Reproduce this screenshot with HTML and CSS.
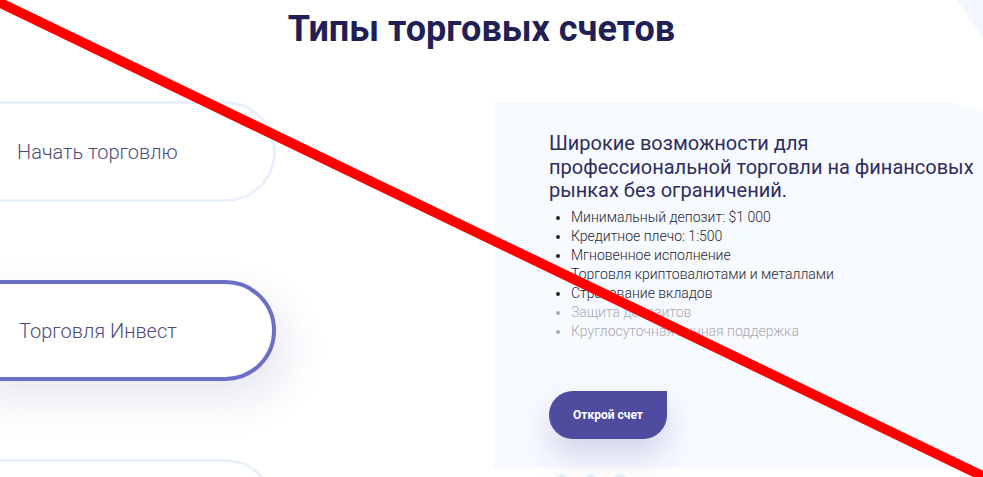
FILE: index.html
```html
<!DOCTYPE html>
<html lang="ru">
<head>
<meta charset="utf-8">
<title>Типы торговых счетов</title>
<link rel="stylesheet" href="styles.css">
</head>
<body>
<div class="page">
  <svg class="corner-deco" width="983" height="477" viewBox="0 0 983 477" aria-hidden="true">
    <polygon points="957,0 983,0 983,38" fill="#f2f6fe"/>
  </svg>
  <h1 class="title">Типы торговых счетов</h1>
  <div class="content">
    <div class="tabs">
      <div class="tab">Начать торговлю</div>
      <div class="tab tab-active">Торговля Инвест</div>
      <div class="tab"></div>
    </div>
    <div class="panel-wrap">
      <div class="panel">
        <p class="panel-title">Широкие возможности для<br>профессиональной торговли на финансовых<br>рынках без ограничений.</p>
        <ul class="features">
          <li>Минимальный депозит: $1 000</li>
          <li>Кредитное плечо: 1:500</li>
          <li>Мгновенное исполнение</li>
          <li>Торговля криптовалютами и металлами</li>
          <li>Страхование вкладов</li>
          <li class="muted">Защита депозитов</li>
          <li class="muted">Круглосуточная личная поддержка</li>
        </ul>
        <button class="open-btn">Открой счет</button>
      </div>
      <div class="dots">
        <span class="dot"></span><span class="dot"></span><span class="dot"></span>
      </div>
    </div>
  </div>
  <svg class="strike" width="983" height="477" viewBox="0 0 983 477" aria-hidden="true">
    <line x1="-10" y1="-2" x2="995" y2="482" stroke="#ff0000" stroke-width="10"/>
  </svg>
</div>
</body>
</html>
```
FILE: styles.css
```css
* { box-sizing: border-box; }
html, body { margin: 0; padding: 0; background: #ffffff; }
body { font-family: Roboto, "Noto Sans", "Liberation Sans", sans-serif; }

.page {
  position: relative;
  width: 983px;
  height: 477px;
  overflow: hidden;
  background: #ffffff;
}

.corner-deco {
  position: absolute;
  left: 0;
  top: 0;
  pointer-events: none;
}

.title {
  position: relative;
  margin: 7px 0 0;
  padding-right: 20px;
  text-align: center;
  font-size: 36px;
  line-height: 44px;
  font-weight: 700;
  color: #211f55;
}

.content {
  position: relative;
  display: flex;
  margin-top: 50px;
}

.tabs {
  flex-shrink: 0;
  width: 276px;
  display: flex;
  flex-direction: column;
  gap: 78px;
}

.tab {
  margin-left: -60px;
  width: 336px;
  height: 101px;
  border: 3px solid #eaf1fd;
  border-radius: 51px;
  padding-left: 74px;
  display: flex;
  align-items: center;
  font-size: 20px;
  font-weight: 300;
  color: #4b4a7c;
  background: #ffffff;
}

.tab-active {
  border: 4px solid #6b70c6;
  padding-left: 75px;
  box-shadow: 12px 18px 40px rgba(70, 70, 150, 0.13);
}

.panel-wrap {
  margin-left: 217px;
  margin-top: 1px;
}

.panel {
  width: 547px;
  height: 366px;
  padding: 30px 0 0 56px;
  background: #f7faff;
  border-radius: 0 100px 0 0;
}

.panel-title {
  margin: 0;
  font-size: 20px;
  line-height: 23.5px;
  font-weight: 400;
  color: #2e2d5e;
}

.features {
  margin: 5px 0 0;
  padding-left: 22px;
  font-size: 14px;
  line-height: 19px;
  font-weight: 300;
  color: #262633;
}

.features .muted {
  color: #a8a8b4;
}

.open-btn {
  display: flex;
  align-items: center;
  justify-content: center;
  margin-top: 50px;
  width: 118px;
  height: 48px;
  border: none;
  border-radius: 24px 0 24px 24px;
  background: #4f4c9f;
  color: #ffffff;
  font-family: Roboto, "Noto Sans", "Liberation Sans", sans-serif;
  font-size: 12px;
  font-weight: 700;
  box-shadow: 0 16px 32px rgba(79, 76, 159, 0.22);
}

.dots {
  display: flex;
  gap: 17px;
  margin-top: 6px;
  padding-left: 63px;
}

.dot {
  width: 12px;
  height: 12px;
  border-radius: 50%;
  background: #e5eefb;
}

.strike {
  position: absolute;
  left: 0;
  top: 0;
  pointer-events: none;
}
```
